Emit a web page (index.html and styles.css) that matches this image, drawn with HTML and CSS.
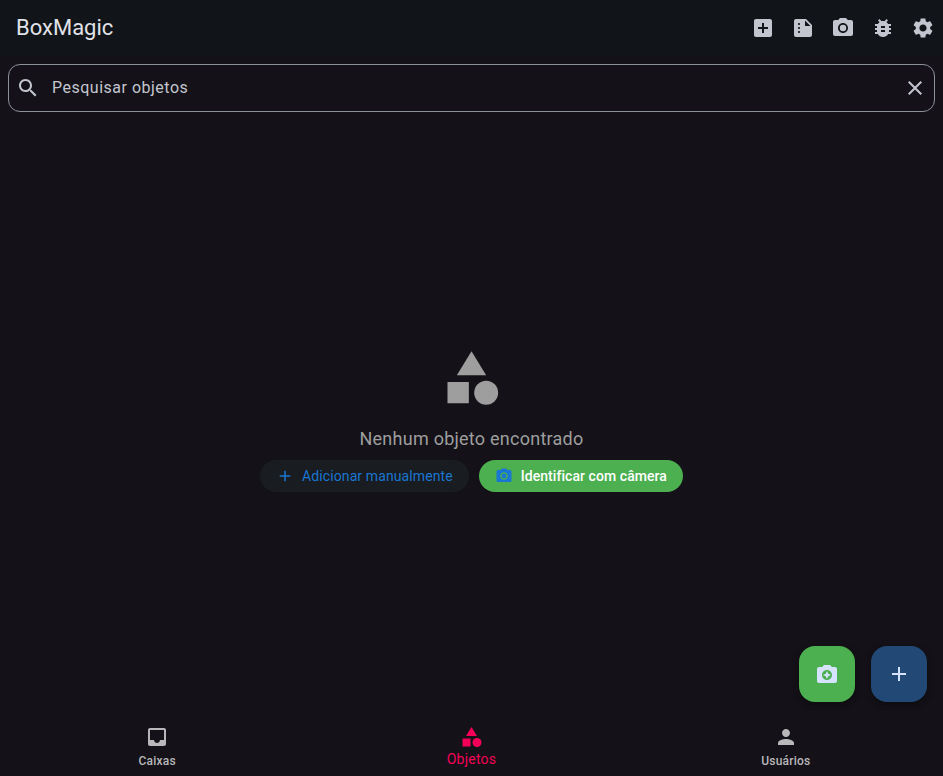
FILE: index.html
```html
<!DOCTYPE html>
<html lang="pt-BR">
<head>
<meta charset="utf-8">
<title>BoxMagic</title>
<link rel="stylesheet" href="styles.css">
</head>
<body>
<svg class="defs" aria-hidden="true">
  <symbol id="add" viewBox="0 0 24 24"><path d="M19 13h-6v6h-2v-6H5v-2h6V5h2v6h6v2z"/></symbol>
  <symbol id="camera" viewBox="0 0 24 24"><circle cx="12" cy="12" r="3.2"/><path d="M9 2L7.17 4H4c-1.1 0-2 .9-2 2v12c0 1.1.9 2 2 2h16c1.1 0 2-.9 2-2V6c0-1.1-.9-2-2-2h-3.17L15 2H9zm3 15c-2.76 0-5-2.24-5-5s2.240-5 5-5 5 2.240 5 5-2.240 5-5 5z"/></symbol>
  <symbol id="category" viewBox="0 0 24 24"><path d="M12 2l-5.500 9h11z"/><circle cx="17.500" cy="17.500" r="4.500"/><path d="M3 13.500h8v8H3z"/></symbol>
</svg>
<div class="app">
  <header class="bar">
    <h1 class="title">BoxMagic</h1>
    <div class="actions">
      <button aria-label="Adicionar"><svg class="icon" viewBox="0 0 24 24"><path d="M19 3H5c-1.110 0-2 .9-2 2v14c0 1.100.89 2 2 2h14c1.100 0 2-.9 2-2V5c0-1.100-.9-2-2-2zm-2 10h-4v4h-2v-4H7v-2h4V7h2v4h4v2z"/></svg></button>
      <button aria-label="Resumo"><svg class="icon" viewBox="0 0 24 24"><path d="M15 3H5c-1.100 0-1.990.9-1.990 2L3 19c0 1.100.89 2 1.990 2H19c1.100 0 2-.9 2-2V9l-6-6zM8 17c-.55 0-1-.45-1-1s.45-1 1-1 1 .45 1 1-.45 1-1 1zm0-4c-.55 0-1-.45-1-1s.45-1 1-1 1 .45 1 1-.45 1-1 1zm0-4c-.55 0-1-.45-1-1s.45-1 1-1 1 .45 1 1-.45 1-1 1zm6 1V4.500l5.500 5.500H14z"/></svg></button>
      <button aria-label="Câmera"><svg class="icon"><use href="#camera"/></svg></button>
      <button aria-label="Depurar"><svg class="icon" viewBox="0 0 24 24"><path d="M20 8h-2.810c-.45-.78-1.070-1.450-1.820-1.960L17 4.410 15.590 3l-2.170 2.170C12.960 5.060 12.490 5 12 5c-.49 0-.96.06-1.410.17L8.410 3 7 4.410l1.620 1.630C7.880 6.550 7.260 7.220 6.810 8H4v2h2.090c-.05.33-.09.66-.09 1v1H4v2h2v1c0 .34.04.67.09 1H4v2h2.810c1.040 1.790 2.970 3 5.190 3s4.150-1.210 5.190-3H20v-2h-2.090c.05-.33.09-.66.09-1v-1h2v-2h-2v-1c0-.34-.04-.67-.09-1H20V8zm-6 8h-4v-2h4v2zm0-4h-4v-2h4v2z"/></svg></button>
      <button aria-label="Configurações"><svg class="icon" viewBox="0 0 24 24"><path d="M19.140 12.940c.04-.3.06-.61.06-.94 0-.32-.02-.64-.07-.94l2.030-1.580c.18-.14.23-.41.12-.61l-1.920-3.320c-.12-.22-.37-.29-.59-.22l-2.390.96c-.5-.38-1.030-.7-1.620-.94l-.36-2.540c-.04-.24-.24-.41-.48-.41h-3.840c-.24 0-.43.17-.47.41l-.36 2.540c-.59.24-1.130.57-1.620.94l-2.390-.96c-.22-.08-.47 0-.59.22L2.740 8.870c-.12.21-.08.47.12.61l2.030 1.580c-.05.3-.09.63-.09.94s.02.64.07.94l-2.030 1.580c-.18.14-.23.41-.12.61l1.920 3.320c.12.22.37.29.59.22l2.390-.96c.5.38 1.030.7 1.620.94l.36 2.540c.05.24.24.41.48.41h3.840c.24 0 .44-.17.47-.41l.36-2.540c.59-.24 1.130-.56 1.620-.94l2.390.96c.22.08.47 0 .59-.22l1.920-3.320c.12-.22.07-.47-.12-.61l-2.010-1.580zM12 15.600c-1.980 0-3.600-1.620-3.600-3.600s1.620-3.600 3.600-3.600 3.600 1.620 3.600 3.600-1.620 3.600-3.600 3.600z"/></svg></button>
    </div>
  </header>
  <div class="search">
    <svg class="icon" viewBox="0 0 24 24"><path d="M15.500 14h-.79l-.28-.27C15.410 12.590 16 11.110 16 9.500 16 5.910 13.090 3 9.500 3S3 5.910 3 9.500 5.910 16 9.500 16c1.610 0 3.090-.59 4.230-1.570l.27.28v.79l5 4.990L20.490 19l-4.990-5zm-6 0C7.010 14 5 11.990 5 9.500S7.010 5 9.500 5 14 7.010 14 9.500 11.990 14 9.500 14z"/></svg>
    <span class="hint">Pesquisar objetos</span>
    <svg class="icon" viewBox="0 0 24 24"><path d="M19 6.410L17.590 5 12 10.590 6.410 5 5 6.410 10.590 12 5 17.590 6.410 19 12 13.410 17.590 19 19 17.590 13.410 12z"/></svg>
  </div>
  <main class="empty">
    <svg class="icon hero"><use href="#category"/></svg>
    <p class="message">Nenhum objeto encontrado</p>
    <div class="choices">
      <button class="pill manual"><svg class="icon"><use href="#add"/></svg><span>Adicionar manualmente</span></button>
      <button class="pill identify"><svg class="icon"><use href="#camera"/></svg><span>Identificar com câmera</span></button>
    </div>
  </main>
  <div class="fabs">
    <button class="fab green" aria-label="Identificar"><svg class="icon" viewBox="0 0 24 24"><path d="M9 3L7.170 5H4c-1.100 0-2 .9-2 2v12c0 1.100.9 2 2 2h16c1.100 0 2-.9 2-2V7c0-1.100-.9-2-2-2h-3.170L15 3H9zm3 15c-2.760 0-5-2.240-5-5s2.240-5 5-5 5 2.240 5 5-2.240 5-5 5z"/><path d="M12 17l1.250-2.750L16 13l-2.750-1.250L12 9l-1.250 2.750L8 13l2.750 1.250z"/></svg></button>
    <button class="fab blue" aria-label="Adicionar objeto"><svg class="icon"><use href="#add"/></svg></button>
  </div>
  <nav class="tabs">
    <a class="tab"><svg class="icon" viewBox="0 0 24 24"><path d="M19 3H4.990c-1.110 0-1.980.89-1.980 2L3 19c0 1.100.88 2 1.990 2H19c1.100 0 2-.9 2-2V5c0-1.110-.9-2-2-2zm0 12h-4c0 1.660-1.350 3-3 3s-3-1.340-3-3H4.990V5H19v10z"/></svg><span>Caixas</span></a>
    <a class="tab selected"><svg class="icon"><use href="#category"/></svg><span>Objetos</span></a>
    <a class="tab"><svg class="icon" viewBox="0 0 24 24"><path d="M12 12c2.210 0 4-1.790 4-4s-1.790-4-4-4-4 1.790-4 4 1.790 4 4 4zm0 2c-2.670 0-8 1.340-8 4v2h16v-2c0-2.660-5.330-4-8-4z"/></svg><span>Usuários</span></a>
  </nav>
</div>
</body>
</html>
```
FILE: styles.css
```css
* { box-sizing: border-box; }
body {
  margin: 0;
  background: #141218;
  font-family: Roboto, "Liberation Sans", sans-serif;
}
button {
  border: 0;
  padding: 0;
  background: none;
  color: inherit;
  font: inherit;
}
.defs { position: absolute; width: 0; height: 0; }
.icon { display: block; flex: none; width: 24px; height: 24px; fill: currentColor; }
.app { position: relative; display: flex; flex-direction: column; height: 776px; overflow: hidden; }
.bar {
  display: flex;
  flex: none;
  align-items: center;
  justify-content: space-between;
  height: 56px;
  padding-left: 16px;
  background: #111418;
  color: #e1e2e8;
}
.title { margin: 0; font-size: 22px; font-weight: 400; line-height: 28px; }
.actions { display: flex; color: #c3c6cf; }
.actions button { display: grid; place-items: center; width: 40px; height: 40px; }
.search {
  display: flex;
  flex: none;
  align-items: center;
  height: 48px;
  margin: 8px;
  padding: 0 7px;
  border: 1px solid #8d9199;
  border-radius: 12px;
  color: #c3c6cf;
}
.hint { flex: 1; margin-left: 12px; font-size: 16px; line-height: 24px; letter-spacing: 0.5px; }
.empty {
  display: flex;
  flex: 1;
  flex-direction: column;
  align-items: center;
  justify-content: center;
}
.hero { width: 64px; height: 64px; margin-right: 1px; color: #9e9e9e; transform: translateX(0.5px); }
.message { margin: 16px 0 8px; color: #9e9e9e; font-size: 18px; line-height: 26px; letter-spacing: 0.25px; }
.choices { display: flex; gap: 10px; }
.pill {
  display: flex;
  align-items: center;
  gap: 8px;
  height: 32px;
  padding: 0 16px;
  border-radius: 16px;
  font-size: 14px;
  line-height: 20px;
  letter-spacing: 0.1px;
}
.pill .icon { width: 18px; height: 18px; color: #1976d2; }
.manual { background: #191c20; color: #1976d2; }
.identify { background: #4caf50; color: #fff; font-weight: 500; letter-spacing: 0.06px; }
.fabs { position: absolute; right: 16px; bottom: 74px; display: flex; gap: 16px; }
.fab {
  display: grid;
  place-items: center;
  width: 56px;
  height: 56px;
  border-radius: 16px;
  color: #d6e3ff;
  box-shadow: 0 3px 5px rgba(0, 0, 0, 0.25), 0 1px 8px rgba(0, 0, 0, 0.15);
}
.green { background: #4caf50; }
.blue { background: #224876; }
.tabs { display: flex; flex: none; height: 58px; color: #b8b7ba; }
.tab {
  display: flex;
  flex: 1;
  flex-direction: column;
  align-items: center;
  padding-top: 7px;
  font-size: 12px;
  font-weight: 500;
  line-height: 16px;
  letter-spacing: 0.2px;
}
.tab span { margin-top: 4px; }
.selected { color: #f50057; font-size: 14px; font-weight: 400; letter-spacing: 0.25px; }
.selected .icon { margin-left: 1px; transform: translateX(-0.5px); }
.selected span { margin-top: 2px; }
```
